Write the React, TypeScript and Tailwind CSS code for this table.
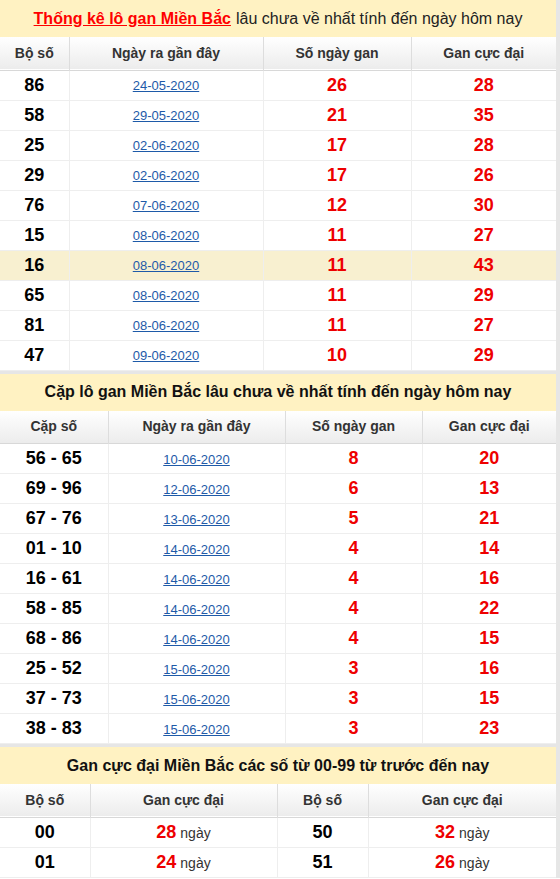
import React from 'react';

const loGan = [
  ['86', '24-05-2020', '26', '28'],
  ['58', '29-05-2020', '21', '35'],
  ['25', '02-06-2020', '17', '28'],
  ['29', '02-06-2020', '17', '26'],
  ['76', '07-06-2020', '12', '30'],
  ['15', '08-06-2020', '11', '27'],
  ['16', '08-06-2020', '11', '43'],
  ['65', '08-06-2020', '11', '29'],
  ['81', '08-06-2020', '11', '27'],
  ['47', '09-06-2020', '10', '29'],
];

const capLo = [
  ['56 - 65', '10-06-2020', '8', '20'],
  ['69 - 96', '12-06-2020', '6', '13'],
  ['67 - 76', '13-06-2020', '5', '21'],
  ['01 - 10', '14-06-2020', '4', '14'],
  ['16 - 61', '14-06-2020', '4', '16'],
  ['58 - 85', '14-06-2020', '4', '22'],
  ['68 - 86', '14-06-2020', '4', '15'],
  ['25 - 52', '15-06-2020', '3', '16'],
  ['37 - 73', '15-06-2020', '3', '15'],
  ['38 - 83', '15-06-2020', '3', '23'],
];

const ganMax = [
  ['00', '28', '50', '32'],
  ['01', '24', '51', '26'],
];

const th = 'h-[33px] border-r border-[#ddd] last:border-r-0 text-center text-[14px] font-bold text-[#333]';
const td = 'h-[30px] border-r border-b border-[#eee] last:border-r-0 text-center';

const HeadRow = ({ cols, widths }: { cols: string[]; widths: string[] }) => (
  <tr className="bg-gradient-to-b from-white to-[#ececec] border-b border-[#d8d8d8]">
    {cols.map((c, i) => (
      <th key={i} className={`${th} ${widths[i]}`}>{c}</th>
    ))}
  </tr>
);

const DateLink = ({ d }: { d: string }) => (
  <a href="#" className="text-[13px] text-[#1e5aa8] underline">{d}</a>
);

export default function App() {
  return (
    <div className="w-[560px] bg-[#e6e6e6] pr-[4px] flex flex-col gap-[3px] font-['Liberation_Sans',Arial,sans-serif]">
      {/* Lô gan */}
      <section className="bg-white">
        <div className="h-[37px] bg-[#fff2c2] flex items-center justify-center text-[16px] text-[#222]">
          <a href="#" className="text-[#f00] font-bold underline mr-[5px]">Thống kê lô gan Miền Bắc</a>
          lâu chưa về nhất tính đến ngày hôm nay
        </div>
        <table className="w-full border-collapse table-fixed">
          <thead>
            <HeadRow cols={['Bộ số', 'Ngày ra gần đây', 'Số ngày gan', 'Gan cực đại']} widths={['w-[69px]', 'w-[194px]', 'w-[148px]', '']} />
          </thead>
          <tbody>
            {loGan.map((r, i) => (
              <tr key={i} className={r[0] === '16' ? 'bg-[#f8f0d0]' : ''}>
                <td className={`${td} text-[18px] font-bold text-black`}>{r[0]}</td>
                <td className={td}><DateLink d={r[1]} /></td>
                <td className={`${td} text-[18px] font-bold text-[#e00]`}>{r[2]}</td>
                <td className={`${td} text-[18px] font-bold text-[#e00]`}>{r[3]}</td>
              </tr>
            ))}
          </tbody>
        </table>
      </section>

      {/* Cặp lô gan */}
      <section className="bg-white">
        <div className="h-[37px] bg-[#fff2c2] flex items-center justify-center text-[16px] font-bold text-[#111]">
          Cặp lô gan Miền Bắc lâu chưa về nhất tính đến ngày hôm nay
        </div>
        <table className="w-full border-collapse table-fixed">
          <thead>
            <HeadRow cols={['Cặp số', 'Ngày ra gần đây', 'Số ngày gan', 'Gan cực đại']} widths={['w-[108px]', 'w-[177px]', 'w-[137px]', '']} />
          </thead>
          <tbody>
            {capLo.map((r, i) => (
              <tr key={i}>
                <td className={`${td} text-[18px] font-bold text-black`}>{r[0]}</td>
                <td className={td}><DateLink d={r[1]} /></td>
                <td className={`${td} text-[18px] font-bold text-[#e00]`}>{r[2]}</td>
                <td className={`${td} text-[18px] font-bold text-[#e00]`}>{r[3]}</td>
              </tr>
            ))}
          </tbody>
        </table>
      </section>

      {/* Gan cực đại */}
      <section className="bg-white">
        <div className="h-[37px] bg-[#fff2c2] flex items-center justify-center text-[16px] font-bold text-[#111]">
          Gan cực đại Miền Bắc các số từ 00-99 từ trước đến nay
        </div>
        <table className="w-full border-collapse table-fixed">
          <thead>
            <HeadRow cols={['Bộ số', 'Gan cực đại', 'Bộ số', 'Gan cực đại']} widths={['w-[90px]', 'w-[187px]', 'w-[91px]', '']} />
          </thead>
          <tbody>
            {ganMax.map((r, i) => (
              <tr key={i}>
                <td className={`${td} text-[18px] font-bold text-black`}>{r[0]}</td>
                <td className={td}>
                  <span className="text-[18px] font-bold text-[#e00]">{r[1]}</span>
                  <span className="text-[14px] text-[#333] ml-[4px]">ngày</span>
                </td>
                <td className={`${td} text-[18px] font-bold text-black`}>{r[2]}</td>
                <td className={td}>
                  <span className="text-[18px] font-bold text-[#e00]">{r[3]}</span>
                  <span className="text-[14px] text-[#333] ml-[4px]">ngày</span>
                </td>
              </tr>
            ))}
          </tbody>
        </table>
      </section>
    </div>
  );
}
